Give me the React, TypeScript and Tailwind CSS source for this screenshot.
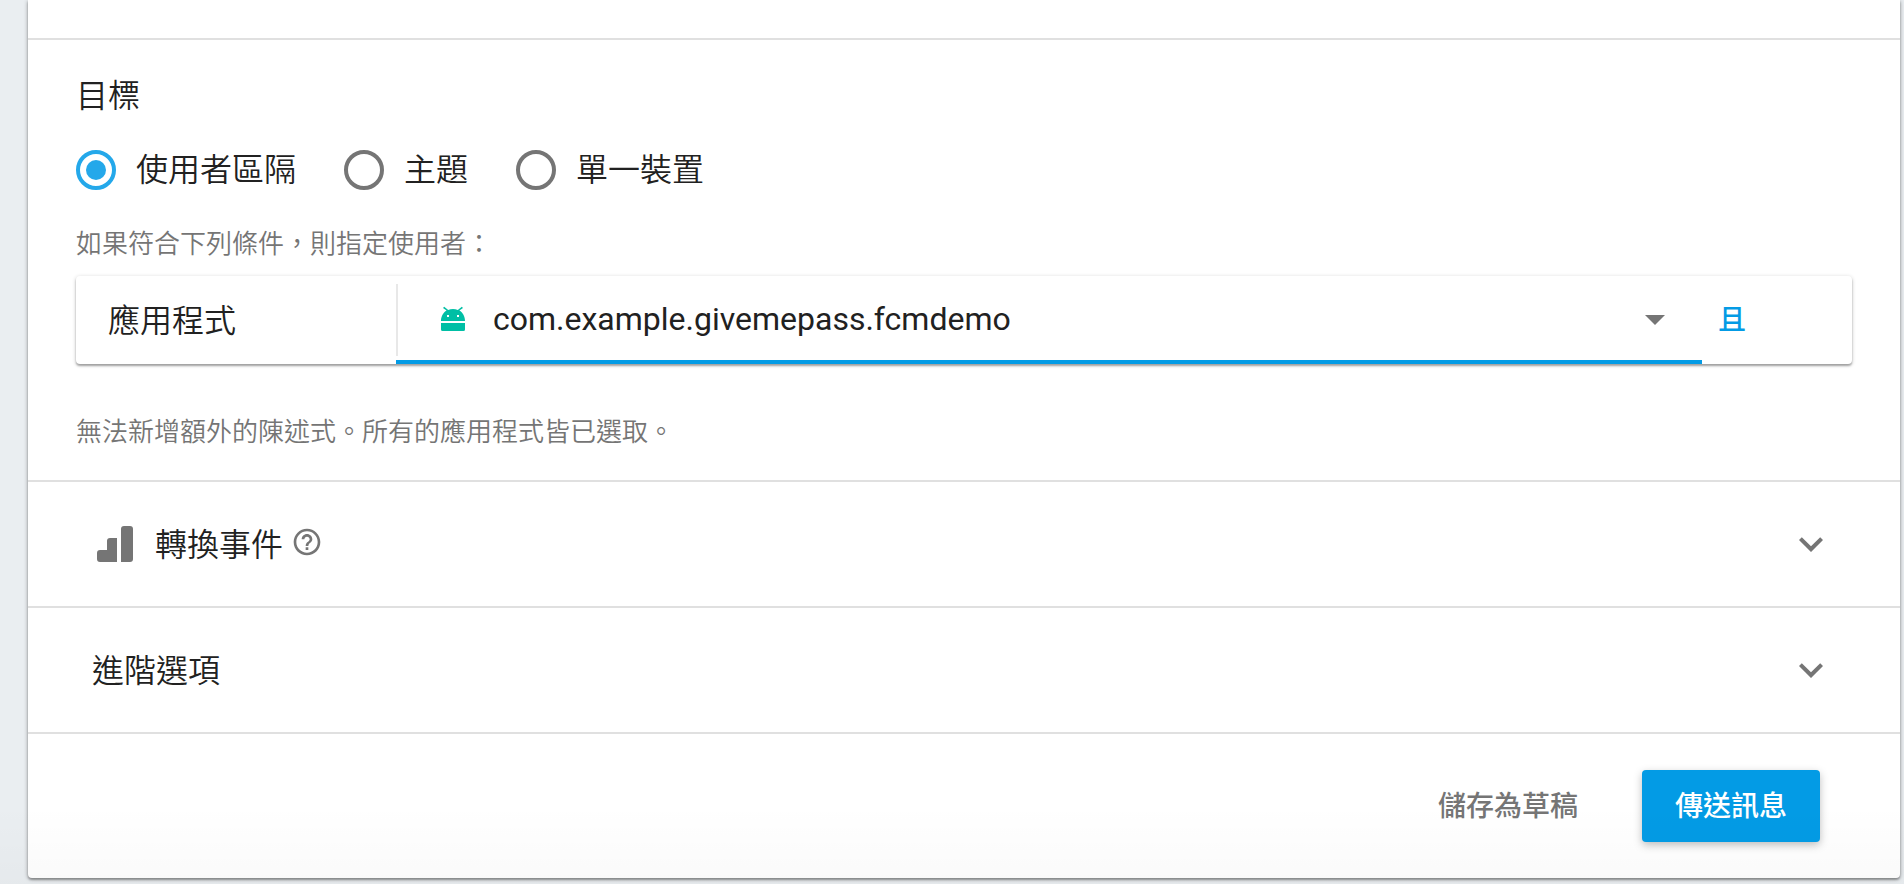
import { useState, type ReactNode } from 'react';

const targets = ['使用者區隔', '主題', '單一裝置'];

function AndroidIcon() {
  return (
    <svg viewBox="0 0 24 24" className="pointer-events-none absolute left-[45px] mt-0.5 size-6 self-center overflow-visible fill-[#00bfa5]" aria-hidden="true">
      <path
        fillRule="evenodd"
        d="M0 16h24v6.500a1.500 1.500 0 0 1-1.500 1.500h-21A1.500 1.500 0 0 1 0 22.500zM0 14C0 9.500 2.300 5.400 5.600 3.500L2 .9 3.200-.2 7.200 2.900C8.600 2.300 10.300 2 12 2s3.400.3 4.800.9L20.800-.2 22 .9 18.400 3.500C21.700 5.400 24 9.500 24 14zM6 8v2h2V8zM16 8v2h2V8z"
      />
    </svg>
  );
}

function StepsIcon() {
  return (
    <svg viewBox="0 0 36 36" className="size-9 fill-[#757575]" aria-hidden="true">
      <path d="M10 24V15a3 3 0 0 1 3-3h7v24H3a3 3 0 0 1-3-3v-6a3 3 0 0 1 3-3z" />
      <path d="M24 3a3 3 0 0 1 3-3h6a3 3 0 0 1 3 3v30a3 3 0 0 1-3 3h-9z" />
    </svg>
  );
}

function HelpIcon() {
  return (
    <svg viewBox="0 0 24 24" className="mb-1 size-8 fill-[#757575]" aria-hidden="true">
      <path d="M11 18h2v-2h-2v2zm1-16C6.480 2 2 6.480 2 12s4.480 10 10 10 10-4.480 10-10S17.520 2 12 2zm0 18c-4.410 0-8-3.590-8-8s3.590-8 8-8 8 3.590 8 8-3.590 8-8 8zm0-14c-2.210 0-4 1.790-4 4h2c0-1.100.9-2 2-2s2 .9 2 2c0 2-3 1.750-3 5h2c0-2.250 3-2.500 3-5 0-2.210-1.790-4-4-4z" />
    </svg>
  );
}

function ChevronIcon() {
  return (
    <svg viewBox="0 0 24 24" className="ml-auto size-12 fill-[#757575]" aria-hidden="true">
      <path d="M16.590 8.590 12 13.170 7.410 8.590 6 10l6 6 6-6z" />
    </svg>
  );
}

function ExpandRow({ children, indent }: { children: ReactNode; indent: string }) {
  return (
    <button type="button" className={`flex h-[126px] w-full items-center border-t-2 border-[#e0e0e0] pr-[65px] text-left ${indent}`}>
      {children}
      <ChevronIcon />
    </button>
  );
}

export default function App() {
  const [target, setTarget] = useState(targets[0]);

  return (
    <div className="relative min-h-screen bg-[#eaeef1] pr-1 pb-1.5 pl-7 font-['Roboto','Noto_Sans_CJK_TC',sans-serif] text-[32px] leading-10 font-[350] text-[#212121]">
      <main className="rounded-b bg-white pt-[38px] shadow-[0_1px_4px_rgba(0,0,0,0.37),0_2px_2px_rgba(0,0,0,0.24)]">
        <section className="border-t-2 border-[#e0e0e0] px-12 pt-9 pb-7">
          <h2>目標</h2>
          <div role="radiogroup" aria-label="目標" className="mt-[34px] flex gap-12">
            {targets.map((name) => (
              <label key={name} className="flex items-center gap-5">
                <input
                  type="radio"
                  name="target"
                  checked={target === name}
                  onChange={() => setTarget(name)}
                  className="grid size-10 appearance-none place-items-center rounded-full border-4 border-[#757575] checked:border-[#24a8ea] checked:before:size-5 checked:before:rounded-full checked:before:bg-[#24a8ea]"
                />
                {name}
              </label>
            ))}
          </div>
          <p className="mt-[34px] text-[26px] text-[#757575]">如果符合下列條件，則指定使用者：</p>
          <div className="mt-3 flex h-[88px] items-stretch rounded shadow-[0_1px_4px_rgba(0,0,0,0.2),0_2px_2px_rgba(0,0,0,0.28)]">
            <label htmlFor="app" className="flex w-80 items-center pt-0.5 pl-8">
              應用程式
            </label>
            <div className="relative flex flex-1 border-b-4 border-[#039be5]">
              <span className="my-2 mb-1 w-0.5 bg-[#e8e8e8]" />
              <AndroidIcon />
              <select id="app" className="flex-1 appearance-none pt-0.5 pl-[95px] font-normal outline-none">
                <option>com.example.givemepass.fcmdemo</option>
              </select>
              <svg viewBox="0 0 20 10" className="pointer-events-none absolute right-[37px] mt-1 w-5 self-center fill-[#757575]" aria-hidden="true">
                <path d="M0 0h20L10 10z" />
              </svg>
            </div>
            <button type="button" className="w-[150px] pt-0.5 pl-4 text-left text-[28px] font-medium text-[#039be5]">
              且
            </button>
          </div>
          <p className="mt-12 text-[26px] text-[#757575]">無法新增額外的陳述式。所有的應用程式皆已選取。</p>
        </section>
        <ExpandRow indent="pl-[69px]">
          <StepsIcon />
          <span className="pt-0.5 pr-2 pl-[22px]">轉換事件</span>
          <HelpIcon />
        </ExpandRow>
        <ExpandRow indent="pl-16">
          <span className="pt-0.5">進階選項</span>
        </ExpandRow>
        <footer className="flex h-[146px] items-center justify-end gap-16 border-t-2 border-[#e0e0e0] pr-20 text-[28px] font-medium">
          <button type="button" className="pt-0.5 text-[#757575]">
            儲存為草稿
          </button>
          <button type="button" className="h-[72px] rounded bg-[#039be5] px-[33px] pt-0.5 text-white shadow-[0_3px_8px_rgba(0,0,0,0.26)]">
            傳送訊息
          </button>
        </footer>
      </main>
      <div className="pointer-events-none absolute inset-x-0 bottom-0 h-20 bg-linear-to-b from-transparent to-black/2" />
    </div>
  );
}
